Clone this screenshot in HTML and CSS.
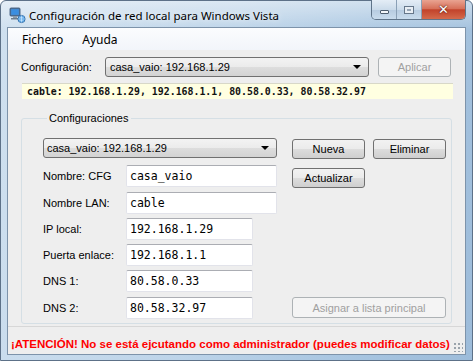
FILE: index.html
```html
<!DOCTYPE html>
<html lang="es">
<head>
    <meta charset="UTF-8">
    <title>Configuración de red local para Windows Vista</title>
    <link rel="stylesheet" href="styles.css">
</head>
<body>
    <div class="window">
        <div class="titlebar">
            <svg class="app-icon" width="17" height="17" viewBox="0 0 17 17">
                <rect x="1" y="1" width="10" height="8" rx="1" fill="#5b7fa6" stroke="#2c4a6e" stroke-width="0.8"/>
                <rect x="2.2" y="2.2" width="7.6" height="5.6" fill="#3b8ee0"/>
                <rect x="4" y="9" width="4" height="2" fill="#8c9aa8"/>
                <rect x="2" y="11" width="8" height="1.5" fill="#6d7d8d"/>
                <circle cx="12.5" cy="12" r="3.6" fill="#4fa3e8" stroke="#1f5fa0" stroke-width="0.8"/>
                <path d="M9.2 12 H15.8 M12.5 8.6 V15.4 M10.2 10 Q12.5 11 14.8 10 M10.2 14 Q12.5 13 14.8 14" stroke="#dff0ff" stroke-width="0.6" fill="none"/>
            </svg>
            <span class="title">Configuración de red local para Windows Vista</span>
            <div class="caption-buttons">
                <span class="cap cap-min"><i></i></span>
                <span class="cap cap-max"><i></i></span>
                <span class="cap cap-close">&#x2715;</span>
            </div>
        </div>

        <div class="client">
            <div class="menubar">
                <span class="menu-item">Fichero</span>
                <span class="menu-item">Ayuda</span>
            </div>

            <div class="content">
                <div class="config-row">
                    <span class="label">Configuración:</span>
                    <div class="combo combo-main">
                        <span>casa_vaio: 192.168.1.29</span>
                        <span class="arrow"></span>
                    </div>
                    <button class="btn" disabled>Aplicar</button>
                </div>

                <div class="summary">cable: 192.168.1.29, 192.168.1.1, 80.58.0.33, 80.58.32.97</div>

                <fieldset class="group">
                    <legend>Configuraciones</legend>
                    <div class="form-grid">
                        <div class="combo combo-group">
                            <span>casa_vaio: 192.168.1.29</span>
                            <span class="arrow"></span>
                        </div>
                        <button class="btn btn-nueva">Nueva</button>
                        <button class="btn btn-eliminar">Eliminar</button>

                        <span class="label">Nombre: CFG</span>
                        <div class="textbox">casa_vaio</div>
                        <button class="btn btn-actualizar">Actualizar</button>

                        <span class="label">Nombre LAN:</span>
                        <div class="textbox">cable</div>

                        <span class="label">IP local:</span>
                        <div class="textbox short">192.168.1.29</div>

                        <span class="label">Puerta enlace:</span>
                        <div class="textbox short">192.168.1.1</div>

                        <span class="label">DNS 1:</span>
                        <div class="textbox short">80.58.0.33</div>

                        <span class="label">DNS 2:</span>
                        <div class="textbox short">80.58.32.97</div>
                        <button class="btn btn-asignar" disabled>Asignar a lista principal</button>
                    </div>
                </fieldset>
            </div>

            <div class="statusbar">
                <span class="warning">¡ATENCIÓN! No se está ejcutando como administrador (puedes modificar datos)</span>
                <span class="grip"></span>
            </div>
        </div>
    </div>
</body>
</html>
```

FILE: styles.css
```css
* {
    margin: 0;
    padding: 0;
    box-sizing: border-box;
}

body {
    width: 473px;
    height: 361px;
    background-color: #ffffff;
    font-family: "Liberation Sans", Arial, sans-serif;
    font-size: 11px;
    color: #000;
}

.window {
    width: 473px;
    height: 361px;
    display: flex;
    flex-direction: column;
    border: 1px solid #5d7188;
    border-radius: 6px 6px 0 0;
    background:
        linear-gradient(to bottom, rgba(255, 255, 255, 0.45), rgba(255, 255, 255, 0) 30px),
        linear-gradient(100deg, #cfe0ef 0%, #bdd4e9 45%, #a9c6e1 75%, #9dbcda 100%);
    padding: 0 6px 5px 6px;
}

/* Title bar */
.titlebar {
    height: 26px;
    display: flex;
    align-items: center;
    position: relative;
}

.app-icon {
    margin: 2px 3px 0 2px;
}

.title {
    font-family: "Noto Sans", "Open Sans", sans-serif;
    font-size: 11.5px;
    color: #000;
    margin-top: 2px;
    text-shadow: 0 0 6px rgba(255, 255, 255, 0.9);
}

.caption-buttons {
    position: absolute;
    top: -1px;
    right: 0;
    display: flex;
    height: 20px;
    border: 1px solid #5f7489;
    border-top: none;
    border-radius: 0 0 5px 5px;
    overflow: hidden;
}

.cap {
    display: flex;
    align-items: center;
    justify-content: center;
    width: 25px;
    height: 100%;
    background: linear-gradient(to bottom, #e4edf6 0%, #cbdbea 50%, #b6cbe0 51%, #c9dced 100%);
    border-right: 1px solid #8aa0b6;
}

.cap-min i {
    width: 9px;
    height: 4px;
    margin-top: 5px;
    border: 1px solid #4d5d6e;
    background: #f4f7fa;
    border-radius: 1px;
}

.cap-max i {
    width: 10px;
    height: 8px;
    border: 1px solid #66778a;
    background: #e8eef4;
    box-shadow: inset 0 0 0 2px #e8eef4, inset 0 0 0 3px #97a6b6;
}

.cap-close {
    width: 43px;
    border-right: none;
    color: #fff;
    font-family: "DejaVu Sans", sans-serif;
    font-size: 13px;
    font-weight: bold;
    text-shadow: 0 0 2px #5a1a10, 0 0 1px #5a1a10;
    background: linear-gradient(to bottom, #e9a391 0%, #d7715a 45%, #c2432b 52%, #d46a4c 100%);
}

/* Client area */
.client {
    flex: 1;
    display: flex;
    flex-direction: column;
    background-color: #eeeeee;
    border: 1px solid #7d93aa;
}

.menubar {
    height: 22px;
    display: flex;
    align-items: center;
    padding-left: 14px;
    gap: 19px;
    background: linear-gradient(to bottom, #fbfcfe, #f2f5fa);
    font-family: "Noto Sans", "Open Sans", sans-serif;
    font-size: 12px;
}

.content {
    flex: 1;
    padding: 7px 13px 0 13px;
}

.config-row {
    display: flex;
    align-items: center;
    height: 20px;
}

.config-row .label {
    width: 84px;
}

.combo {
    display: flex;
    align-items: center;
    justify-content: space-between;
    height: 20px;
    padding: 0 7px 0 4px;
    border: 1px solid #707070;
    border-radius: 3px;
    background: linear-gradient(to bottom, #f3f3f3 0%, #ebebeb 50%, #dddddd 51%, #d3d3d3 100%);
    color: #000;
}

.combo-main {
    width: 264px;
    margin-right: 9px;
}

.arrow {
    width: 0;
    height: 0;
    border-left: 4px solid transparent;
    border-right: 4px solid transparent;
    border-top: 4px solid #000;
}

.btn {
    height: 20px;
    width: 73px;
    font-family: "Liberation Sans", Arial, sans-serif;
    font-size: 11px;
    color: #000;
    border: 1px solid #707070;
    border-radius: 3px;
    background: linear-gradient(to bottom, #f2f2f2 0%, #ebebeb 50%, #dddddd 51%, #cfcfcf 100%);
}

.btn:disabled {
    color: #a0a0a0;
    border-color: #adb2b5;
    background: #f4f4f4;
}

.summary {
    margin-top: 6px;
    height: 16px;
    width: 431px;
    margin-left: 1px;
    padding-left: 5px;
    background-color: #ffffe1;
    border-top: 1px solid #d8d8c8;
    font-family: "DejaVu Sans Mono", monospace;
    font-size: 9.9px;
    font-weight: bold;
    line-height: 15px;
    color: #111;
}

/* Group box */
.group {
    margin-top: 13px;
    width: 431px;
    height: 212px;
    border: 1px solid #d5dfe5;
    border-radius: 3px;
    padding: 13px 0 0 21px;
}

.group legend {
    margin-left: 4px;
    padding: 0 2px;
    font-size: 11px;
}

.form-grid {
    display: grid;
    grid-template-columns: 83px 151px 15px 73px 8px 73px;
    grid-template-rows: 24px repeat(6, 22px);
    row-gap: 4.3px;
    align-items: center;
}

.combo-group {
    grid-column: 1 / 3;
    align-self: start;
    margin-top: 1px;
    padding-left: 3px;
}

.btn-nueva {
    grid-column: 4;
    align-self: start;
    margin-top: 2px;
}

.btn-eliminar {
    grid-column: 6;
    align-self: start;
    margin-top: 2px;
}

.btn-actualizar {
    grid-column: 4;
    align-self: start;
    margin-top: 3px;
}

.btn-asignar {
    grid-column: 4 / 7;
    width: auto;
    height: 21px;
}

.form-grid .label {
    grid-column: 1;
}

.textbox {
    grid-column: 2;
    height: 22px;
    background: #fff;
    border: 1px solid #e2e3ea;
    border-top-color: #abadb3;
    border-radius: 2px;
    padding-left: 3px;
    font-family: "DejaVu Sans Mono", monospace;
    font-size: 11.5px;
    line-height: 20px;
}

.textbox.short {
    width: 127px;
}

/* Status bar */
.statusbar {
    height: 28px;
    display: flex;
    align-items: center;
    justify-content: space-between;
    padding: 6px 2px 0 3px;
    border-top: 1px solid #d7d7d7;
}

.warning {
    font-family: "Liberation Sans", Arial, sans-serif;
    font-weight: bold;
    font-size: 11.5px;
    color: #ff0000;
    white-space: nowrap;
}

.grip {
    flex-shrink: 0;
    width: 10px;
    height: 10px;
    align-self: flex-end;
    margin-bottom: 2px;
    background:
        radial-gradient(circle, #9aa3ab 1px, transparent 1.2px) 0 0 / 4px 4px;
}
```
